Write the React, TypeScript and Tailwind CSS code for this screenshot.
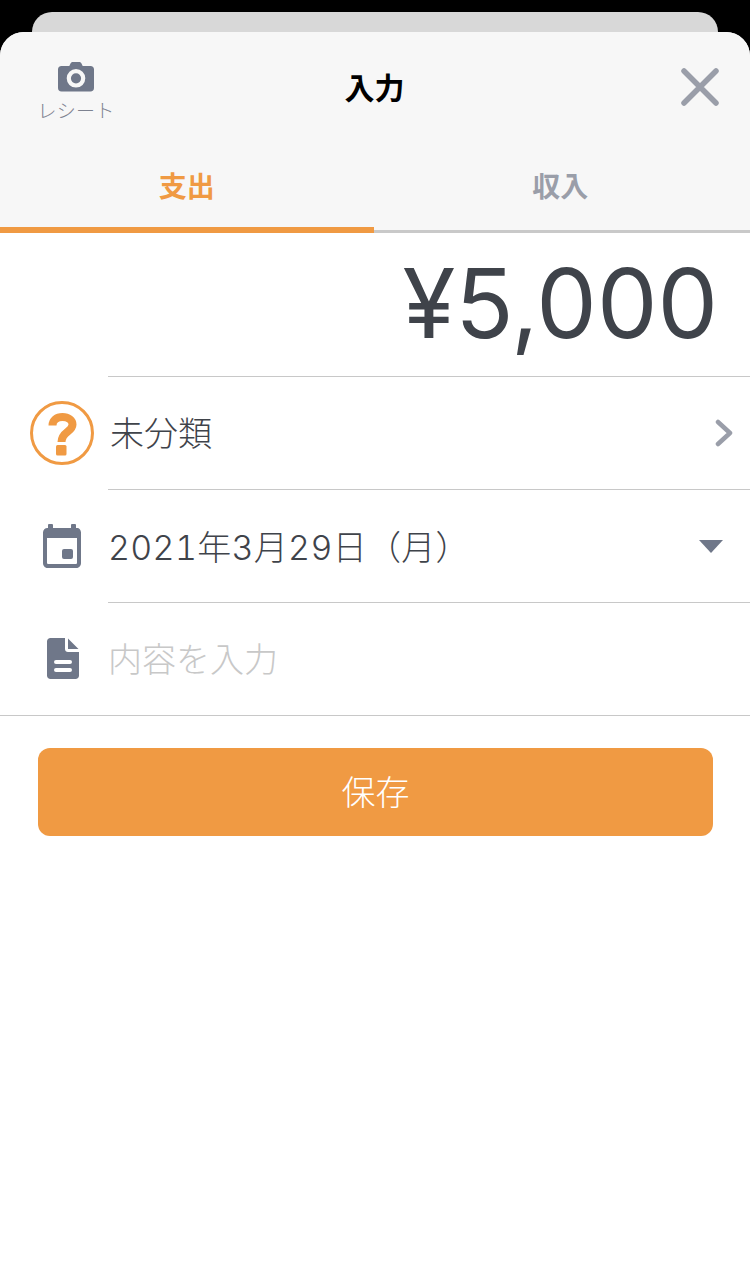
import React from "react";

const jp = "font-['Liberation_Sans','Noto_Sans_CJK_JP',sans-serif]";

const CameraIcon = () => (
  <svg width="38" height="30" viewBox="0 0 38 30" className="block">
    <path
      fillRule="evenodd"
      fill="#6f7789"
      d="M13.500 1.500c.4-.9 1.200-1.500 2.200-1.500h6.600c1 0 1.800.6 2.200 1.500L25.700 4H33.500c2.200 0 3.500 1.400 3.500 3.400V26c0 2.200-1.300 3.600-3.500 3.600h-29C2.300 29.600 1 28.200 1 26V7.400C1 5.400 2.300 4 4.500 4h7.800l1.200-2.500zM19 7a9.300 9.300 0 1 0 0 18.600A9.300 9.300 0 0 0 19 7zm0 4.200a5.100 5.100 0 1 1 0 10.200 5.100 5.100 0 0 1 0-10.200z"
    />
  </svg>
);

const CloseIcon = () => (
  <svg width="38" height="38" viewBox="0 0 38 38" className="block">
    <path d="M3 3l32 32M35 3L3 35" stroke="#9a9ea9" strokeWidth="5.500" strokeLinecap="round" />
  </svg>
);

const QuestionIcon = () => (
  <svg width="64" height="64" viewBox="0 0 64 64" className="block">
    <circle cx="32" cy="32" r="30.500" fill="#fff" stroke="#f09a43" strokeWidth="3" />
    <path
      d="M22.500 24.500c0-5 4.200-8.500 10-8.500S42.500 19.300 42.500 23.500c0 7.500-11 7-11 17.500"
      fill="none"
      stroke="#f09a43"
      strokeWidth="8"
    />
    <rect x="26" y="44" width="10.500" height="10.500" rx="1.500" fill="#f09a43" />
  </svg>
);

const CalendarIcon = () => (
  <svg width="38" height="44" viewBox="0 0 38 44" className="block">
    <path
      fillRule="evenodd"
      fill="#6f7789"
      d="M6 0h3a1 1 0 0 1 1 1v3h18V1a1 1 0 0 1 1-1h3a1 1 0 0 1 1 1v3h1.500C36 4 38 6 38 8.500V39c0 2.800-2 5-4.500 5h-29C2 44 0 41.800 0 39V8.500C0 6 2 4 4.500 4H5V1a1 1 0 0 1 1-1zM4 14v24.500c0 1 .5 1.500 1.500 1.500h27c1 0 1.500-.5 1.500-1.500V14H4z"
    />
    <rect x="19" y="25" width="11" height="10" rx="2" fill="#6f7789" />
  </svg>
);

const DocIcon = () => (
  <svg width="32" height="41" viewBox="0 0 32 41" className="block">
    <path
      fillRule="evenodd"
      fill="#6f7789"
      d="M3.500 0H18v11c0 1.700 1.300 3 3 3h11v23.500c0 2-1.500 3.500-3.500 3.500h-25C1.500 41 0 39.500 0 37.500v-34C0 1.500 1.500 0 3.500 0zM21 .5L31.500 11H21V.5zM9 22a2 2 0 0 0 0 4h14a2 2 0 0 0 0-4H9zm0 8a2 2 0 0 0 0 4h14a2 2 0 0 0 0-4H9z"
    />
  </svg>
);

const ChevronIcon = () => (
  <svg width="18" height="28" viewBox="0 0 18 28" className="block">
    <path d="M3 3l12 11L3 25" fill="none" stroke="#9a9ea9" strokeWidth="4.500" strokeLinecap="round" strokeLinejoin="round" />
  </svg>
);

const CaretIcon = () => (
  <svg width="24" height="13" viewBox="0 0 24 13" className="block">
    <path d="M0 0h24L12 13z" fill="#6f7789" />
  </svg>
);

type RowProps = {
  icon: React.ReactNode;
  children: React.ReactNode;
  right?: React.ReactNode;
};

const Row = ({ icon, children, right }: RowProps) => (
  <div className="flex h-[113px] items-center">
    <div className="flex w-[108px] shrink-0 justify-center pl-[16px]">{icon}</div>
    <div className="flex h-full flex-1 items-center justify-between border-t border-[#c8c8c8]">
      {children}
      {right}
    </div>
  </div>
);

export default function App() {
  return (
    <div className={`flex h-[1286px] w-[750px] flex-col overflow-hidden bg-black pt-3 ${jp}`}>
      <div className="mx-8 h-5 shrink-0 rounded-t-[20px] bg-[#d8d8d8]" />
      <div className="flex flex-1 flex-col overflow-hidden rounded-t-[24px] bg-white">
        <div className="bg-[#f7f7f7]">
          <div className="grid h-[110px] grid-cols-[1fr_auto_1fr] items-start pl-[36px] pr-[31px] pt-[30px]">
            <div className="flex w-[80px] flex-col items-center">
              <CameraIcon />
              <span className="mt-[8px] text-[19px] font-light leading-[24px] tracking-[0.3px] text-[#7d8290]">レシート</span>
            </div>
            <span className="ml-[-6px] mt-[8px] text-[30px] font-bold leading-[38px] text-black">入力</span>
            <div className="mt-[6px] justify-self-end">
              <CloseIcon />
            </div>
          </div>
          <div className="flex h-[91px]">
            <div className="flex flex-1 items-center justify-center border-b-[6px] border-[#f09a43] pt-[6px] text-[28px] font-bold text-[#f09a43]">
              支出
            </div>
            <div className="flex flex-1 items-center justify-center border-b-[3px] border-[#c9c9c9] pr-[3px] pt-[3px] text-[28px] font-bold text-[#9a9ea9]">
              収入
            </div>
          </div>
        </div>

        <div className="flex h-[143px] items-center justify-end pb-[4px] pr-[32px] font-['Inter',sans-serif] text-[96px] leading-none text-[#3f434a]">
          ¥5,000
        </div>

        <Row
          icon={<QuestionIcon />}
          right={
            <div className="pr-[17px]">
              <ChevronIcon />
            </div>
          }
        >
          <span className="pl-[2px] pt-[3px] text-[34px] font-light text-[#3f434a]">未分類</span>
        </Row>
        <Row
          icon={<CalendarIcon />}
          right={
            <div className="pr-[27px]">
              <CaretIcon />
            </div>
          }
        >
          <span className="pt-[2px] font-['Inter','Noto_Sans_CJK_JP',sans-serif] text-[34px] font-light tabular-nums tracking-[0.3px] text-[#3f434a]">
            2021年3月29日（月）
          </span>
        </Row>
        <Row icon={<div className="pl-[1px]"><DocIcon /></div>}>
          <span className="pt-[3px] text-[34px] font-light text-[#c8c8c8]">内容を入力</span>
        </Row>

        <div className="border-t border-[#c8c8c8] pl-[38px] pt-[32px]">
          <button className="flex h-[88px] w-[675px] items-center justify-center rounded-[12px] bg-[#f09a43] pt-[3px] text-[34px] font-light text-white">
            保存
          </button>
        </div>
      </div>
    </div>
  );
}
